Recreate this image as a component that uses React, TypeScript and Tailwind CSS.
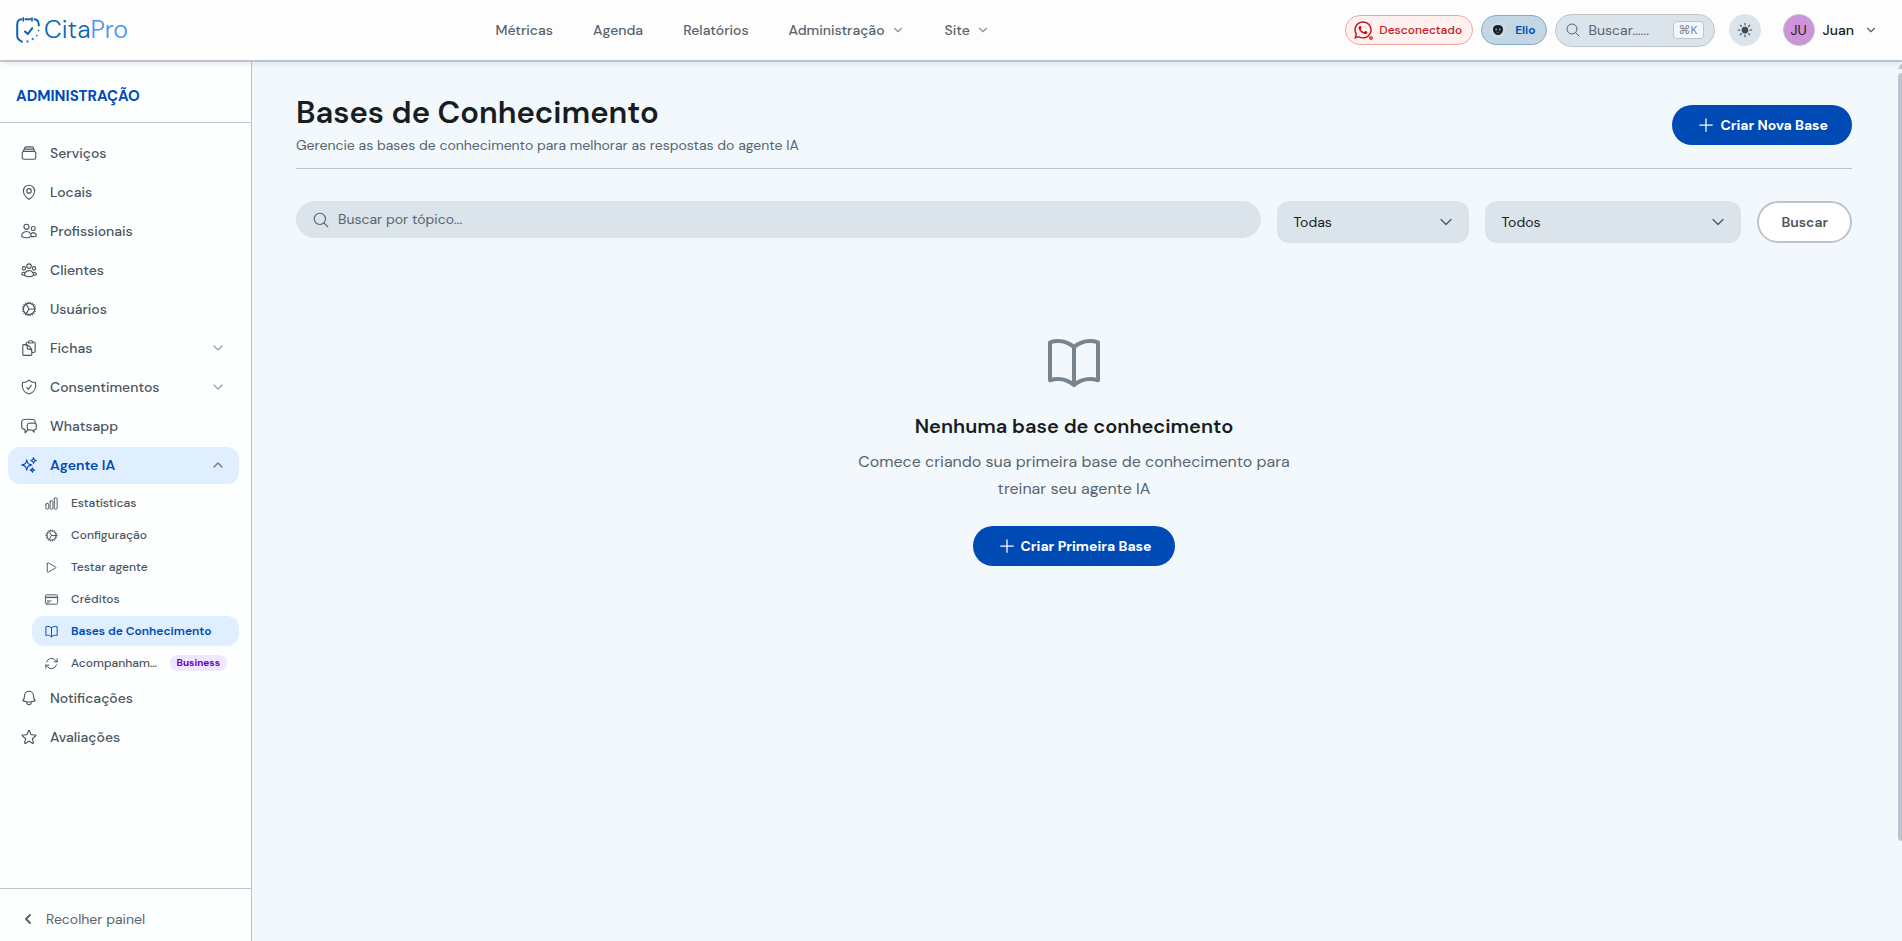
import type { ComponentType } from 'react'
import {
  HiOutlineArrowPath,
  HiOutlineBell,
  HiOutlineBookOpen,
  HiOutlineChartBar,
  HiOutlineChatBubbleLeftRight,
  HiOutlineClipboardDocument,
  HiOutlineCog,
  HiOutlineCreditCard,
  HiOutlineMagnifyingGlass,
  HiOutlineMapPin,
  HiOutlinePlay,
  HiOutlinePlus,
  HiOutlineRectangleStack,
  HiOutlineShieldCheck,
  HiOutlineSparkles,
  HiOutlineStar,
  HiOutlineUserGroup,
  HiOutlineUsers,
  HiSun,
} from 'react-icons/hi2'
import { FaWhatsapp } from 'react-icons/fa'
import { ChevronDown, ChevronLeft, ChevronUp } from 'lucide-react'

type Icon = ComponentType<{ className?: string }>

type SubItem = { label: string; icon: Icon; active?: boolean; badge?: string }

type Item = {
  label: string
  icon: Icon
  expandable?: boolean
  children?: SubItem[]
}

const topLinks = [
  { label: 'Métricas' },
  { label: 'Agenda' },
  { label: 'Relatórios' },
  { label: 'Administração', menu: true },
  { label: 'Site', menu: true },
]

const items: Item[] = [
  { label: 'Serviços', icon: HiOutlineRectangleStack },
  { label: 'Locais', icon: HiOutlineMapPin },
  { label: 'Profissionais', icon: HiOutlineUsers },
  { label: 'Clientes', icon: HiOutlineUserGroup },
  { label: 'Usuários', icon: HiOutlineCog },
  { label: 'Fichas', icon: HiOutlineClipboardDocument, expandable: true },
  { label: 'Consentimentos', icon: HiOutlineShieldCheck, expandable: true },
  { label: 'Whatsapp', icon: HiOutlineChatBubbleLeftRight },
  {
    label: 'Agente IA',
    icon: HiOutlineSparkles,
    children: [
      { label: 'Estatísticas', icon: HiOutlineChartBar },
      { label: 'Configuração', icon: HiOutlineCog },
      { label: 'Testar agente', icon: HiOutlinePlay },
      { label: 'Créditos', icon: HiOutlineCreditCard },
      { label: 'Bases de Conhecimento', icon: HiOutlineBookOpen, active: true },
      { label: 'Acompanham…', icon: HiOutlineArrowPath, badge: 'Business' },
    ],
  },
  { label: 'Notificações', icon: HiOutlineBell },
  { label: 'Avaliações', icon: HiOutlineStar },
]

function Logo() {
  return (
    <a href="#" className="flex w-[124px] items-center gap-1">
      <svg viewBox="0 0 24 26" className="h-[26px] w-6 shrink-0" fill="none" strokeLinecap="round">
        <path
          d="M6 24.6C3 23.4 1.2 21.5 1.2 18.5V7.5C1.2 4.3 2.8 2.3 5.5 2.3M9.5 2.3H14.5M18.500 2.3C21.3 2.5 22.8 4.3 22.8 8.5"
          stroke="#0b66b5"
          strokeWidth="2"
        />
        <path d="M7.3 .9V4M16 .9V4" stroke="#0b66b5" strokeWidth="1.6" />
        <path d="M9 14.5L11.8 17L16.3 11.2" stroke="#0b5cab" strokeWidth="2" strokeLinejoin="round" />
        <g fill="#3b8bea">
          <circle cx="22.5" cy="13.5" r="1" />
          <circle cx="20.8" cy="18.5" r="1" />
          <circle cx="16.8" cy="22" r="1.2" />
          <circle cx="11.5" cy="24.5" r="1.2" />
        </g>
      </svg>
      <span className="text-[25px] leading-8 font-light text-[#0b66b5]">
        Cita<span className="text-[#4a94f5]">Pro</span>
      </span>
    </a>
  )
}

function TopBar() {
  return (
    <header className="relative z-10 flex h-[62px] shrink-0 items-center justify-between border-b-2 border-[#bcc5ce] bg-[#fdfdfe] pl-4 pr-6 shadow-md shadow-slate-900/5">
      <Logo />
      <nav className="flex items-center gap-10 text-sm font-medium text-[#57646d]">
        {topLinks.map((link) => (
          <a key={link.label} href="#" className="flex items-center gap-1.5">
            {link.label}
            {link.menu && <ChevronDown className="size-3.5 text-[#8a949b]" />}
          </a>
        ))}
      </nav>
      <div className="flex items-center gap-2">
        <button className="flex h-[30px] items-center gap-1.5 rounded-full border border-[#f3a5a2] bg-[#fff1f0] pl-[7px] pr-2.5 text-xs font-medium text-[#c5141a]">
          <span className="relative">
            <FaWhatsapp className="size-5" />
            <span className="absolute bottom-0 right-0 size-1 rounded-full bg-[#d8484b]" />
          </span>
          Desconectado
        </button>
        <button className="flex h-[30px] items-center gap-[9px] rounded-full border border-[#83a9cf] bg-[#c2d6e4] pl-2 pr-2.5 text-xs font-semibold text-[#004ab5]">
          <svg viewBox="0 0 16 16" className="size-4">
            <circle cx="8" cy="8" r="7.5" fill="#cfdde6" />
            <path d="M3 7C3 4.5 5 3 8 3S13 4.5 13 7C13 10.5 11 13 8 13S3 10.5 3 7Z" fill="#17212b" />
            <circle cx="6.2" cy="7.5" r=".9" fill="#8fa6b5" />
            <circle cx="9.8" cy="7.5" r=".9" fill="#8fa6b5" />
            <path d="M6.5 10.3H9.5" stroke="#5d7483" strokeWidth=".8" />
          </svg>
          Elio
        </button>
        <button className="flex h-[33px] w-40 items-center gap-2 rounded-full border border-[#bcc5ce] bg-[#dbe3eb] pl-[9px] pr-2.5 text-sm text-[#57646d]">
          <HiOutlineMagnifyingGlass className="size-4" />
          Buscar......
          <kbd className="ml-auto rounded border border-[#bcc5ce] bg-[#f3f8fd] px-[5px] font-['DM_Sans','DejaVu_Sans',sans-serif] text-xs text-[#7b868e]">
            ⌘K
          </kbd>
        </button>
        <button aria-label="Tema" className="ml-1.5 flex size-8 items-center justify-center rounded-full bg-[#dbe3eb] text-[#3f4b54]">
          <HiSun className="size-[18px]" />
        </button>
        <button className="ml-3.5 flex items-center text-sm font-medium text-[#171d21]">
          <span className="mr-2 flex size-8 items-center justify-center rounded-full border border-[#bcc5ce] bg-[#ce93d8] font-normal">
            JU
          </span>
          Juan
          <ChevronDown className="ml-2.5 size-3.5 text-[#57646d]" />
        </button>
      </div>
    </header>
  )
}

function SubLink({ item }: { item: SubItem }) {
  return (
    <a
      href="#"
      className={
        item.active
          ? 'flex h-[30px] items-center gap-3 rounded-xl bg-[#e0efff] px-3 text-xs font-semibold text-[#004ab5]'
          : 'flex h-[30px] items-center gap-3 rounded-xl px-3 text-xs font-medium'
      }
    >
      <item.icon className="size-[15px] shrink-0" />
      <span className="whitespace-nowrap">{item.label}</span>
      {item.badge && (
        <span className="ml-auto rounded-full bg-[#efe6ff] px-[7px] text-[10px] font-bold leading-4 text-[#6a00b8]">
          {item.badge}
        </span>
      )}
    </a>
  )
}

function Sidebar() {
  return (
    <aside className="flex w-[252px] shrink-0 flex-col border-r border-[#bcc5ce] bg-[#fdfefe]">
      <h2 className="border-b border-[#bcc5ce] px-4 pb-4 pt-6 text-[15px] font-bold leading-5 text-[#004ab5]">
        ADMINISTRAÇÃO
      </h2>
      <nav className="flex flex-1 flex-col gap-0.5 pl-2 pr-3 pt-3 text-sm font-medium text-[#4b565e]">
        {items.map((item) => (
          <div key={item.label}>
            <a
              href="#"
              className={
                item.children
                  ? 'flex h-[37px] items-center gap-3 rounded-xl bg-[#e0efff] px-3 pb-0.5 font-semibold text-[#004ab5]'
                  : 'flex h-[37px] items-center gap-3 rounded-xl px-3 pb-0.5'
              }
            >
              <item.icon className="size-[18px]" />
              {item.label}
              {item.expandable && <ChevronDown className="ml-auto mr-px size-4 text-[#9aa3aa]" />}
              {item.children && <ChevronUp className="ml-auto mr-px size-4 text-[#6b7880]" />}
            </a>
            {item.children && (
              <div className="ml-6 mt-1 flex flex-col gap-0.5">
                {item.children.map((child) => (
                  <SubLink key={child.label} item={child} />
                ))}
              </div>
            )}
          </div>
        ))}
      </nav>
      <button className="flex items-center gap-2.5 border-t border-[#bcc5ce] px-5 pb-3 pt-5 text-sm text-[#57646d]">
        <ChevronLeft className="size-4" strokeWidth={3} />
        Recolher painel
      </button>
    </aside>
  )
}

function PrimaryButton({ label }: { label: string }) {
  return (
    <button className="flex h-10 items-center gap-1 rounded-full bg-[#004ab5] px-6 text-sm font-bold text-white">
      <HiOutlinePlus className="size-5" />
      {label}
    </button>
  )
}

function Filter({ label, options, className }: { label: string; options: string[]; className: string }) {
  return (
    <div className={className}>
      <select
        aria-label={label}
        className="h-[42px] w-full appearance-none rounded-xl bg-[#dbe3eb] pl-4 pr-10 text-sm text-[#171d21]"
      >
        {options.map((option) => (
          <option key={option}>{option}</option>
        ))}
      </select>
      <ChevronDown className="pointer-events-none absolute right-[13px] top-[11px] size-5 text-[#4b565e]" strokeWidth={1.5} />
    </div>
  )
}

export default function App() {
  return (
    <div className="flex h-screen flex-col bg-[#f3f8fd] font-['DM_Sans','Open_Sans',sans-serif]">
      <TopBar />
      <div className="flex min-h-0 flex-1">
        <Sidebar />
        <main className="min-w-0 flex-1 px-11 pt-8">
          <div className="flex items-center justify-between border-b border-[#bcc5ce] pb-3">
            <div>
              <h1 className="text-[31px] font-semibold leading-[38px] text-[#171d21]">Bases de Conhecimento</h1>
              <p className="mt-[3px] pb-px text-sm text-[#57646d]">
                Gerencie as bases de conhecimento para melhorar as respostas do agente IA
              </p>
            </div>
            <PrimaryButton label="Criar Nova Base" />
          </div>

          <form className="mt-8 flex items-start gap-4">
            <label className="flex h-[37px] flex-1 items-center gap-2 rounded-full bg-[#dbe3eb] px-4 text-[#57646d]">
              <HiOutlineMagnifyingGlass className="size-[18px]" />
              <input
                type="text"
                aria-label="Buscar por tópico"
                placeholder="Buscar por tópico..."
                className="min-w-0 flex-1 bg-transparent pb-0.5 text-sm outline-none placeholder:text-[#57646d]"
              />
            </label>
            <Filter label="Categoria" options={['Todas']} className="relative w-48" />
            <Filter label="Estado" options={['Todos']} className="relative w-64" />
            <button
              type="button"
              className="h-[42px] rounded-full border-2 border-[#bcc5ce] bg-white px-[22px] text-sm font-semibold text-[#4b565e]"
            >
              Buscar
            </button>
          </form>

          <section className="mt-6 flex flex-col items-center py-16 text-center">
            <HiOutlineBookOpen className="size-16 text-[#78858e]" />
            <h2 className="mt-[17px] text-xl font-semibold text-[#171d21]">Nenhuma base de conhecimento</h2>
            <p className="mb-6 mt-2 max-w-md text-base leading-[27px] text-[#57646d]">
              Comece criando sua primeira base de conhecimento para treinar seu agente IA
            </p>
            <PrimaryButton label="Criar Primeira Base" />
          </section>
        </main>
        <div className="flex w-1.5 shrink-0 flex-col items-end gap-1 pb-[100px] pt-0.5">
          <svg viewBox="0 0 4 5" className="h-[5px] w-1">
            <path d="M0 5L3 0H4V5Z" fill="#bcc5ce" />
          </svg>
          <div className="w-1 flex-1 rounded-l bg-[#bcc5ce]" />
        </div>
      </div>
    </div>
  )
}
